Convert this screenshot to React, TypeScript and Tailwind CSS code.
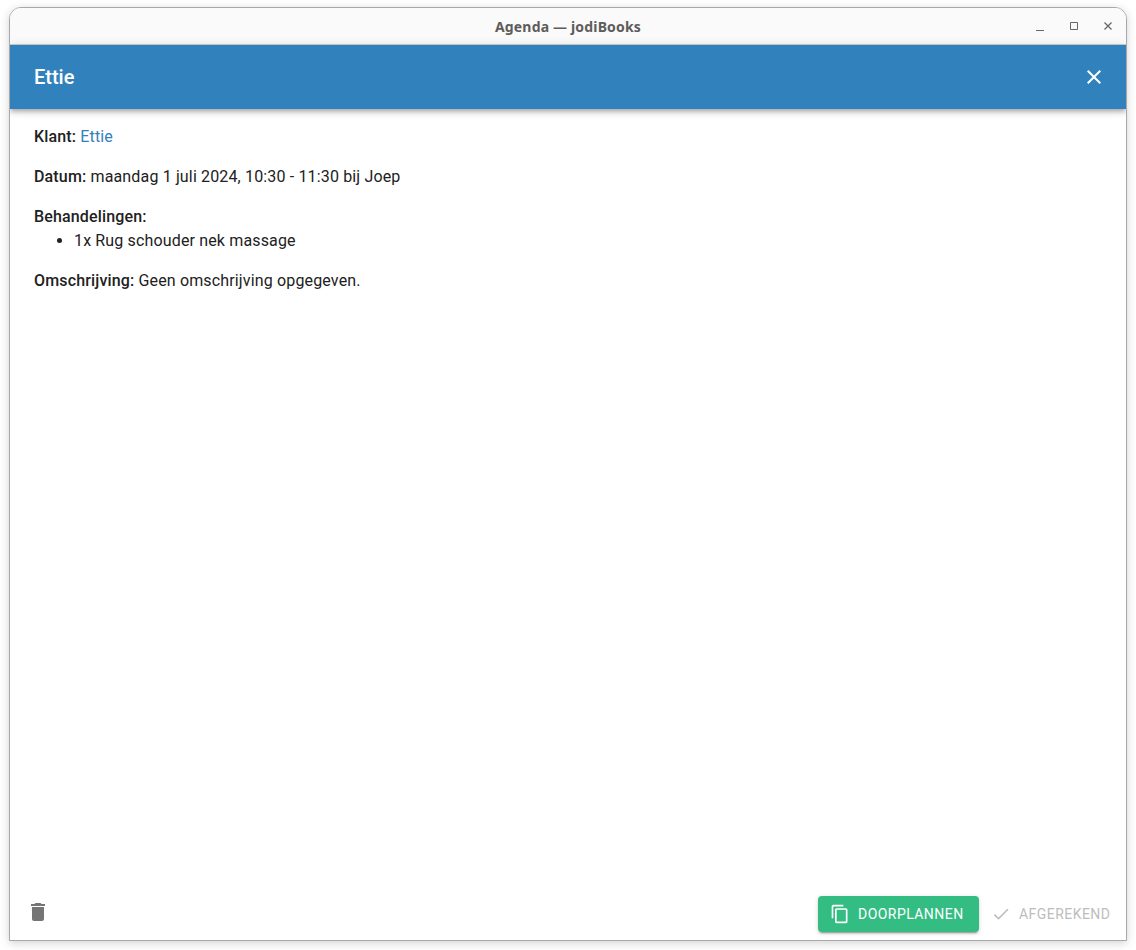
export default function App() {
  return (
    <div className="h-[950px] w-[1136px] bg-white pt-[7px] pl-[9px] pr-[9px] pb-[9px] font-['Roboto',sans-serif] overflow-hidden">
      <div className="h-full flex flex-col border border-[#a8a8a8] rounded-t-[12px] bg-white shadow-[0_2px_10px_rgba(0,0,0,0.18)] overflow-hidden">
        <div className="relative h-[37px] shrink-0 bg-[#fafafa] border-b border-[#cfcfcf] flex items-center justify-center">
          <span className="font-['Noto_Sans',sans-serif] font-bold text-[14px] tracking-[0.17px] text-[#5e5c5a]">Agenda — jodiBooks</span>
          <div className="absolute right-[10px] top-[10px] flex items-center gap-[18px]">
            <svg width="16" height="16" viewBox="0 0 16 16"><path d="M4 12h8v1H4z" fill="#666" /></svg>
            <svg width="16" height="16" viewBox="0 0 16 16" fill="none"><path d="M4.5 4.5h7v7h-7z" stroke="#666" /></svg>
            <svg width="16" height="16" viewBox="0 0 16 16" fill="none"><path d="M4.5 4.5l7 7M11.5 4.5l-7 7" stroke="#666" strokeWidth="1.3" /></svg>
          </div>
        </div>
        <header className="relative z-10 h-[64px] shrink-0 bg-[#3181bd] flex items-center justify-between pl-[24px] pr-[20px] shadow-[0_2px_4px_-1px_rgba(0,0,0,0.2),0_4px_5px_0_rgba(0,0,0,0.14),0_1px_10px_0_rgba(0,0,0,0.12)]">
          <h1 className="text-[20px] font-medium text-white leading-[32px]">Ettie</h1>
          <svg width="24" height="24" viewBox="0 0 24 24" fill="#fff"><path d="M19 6.41L17.59 5 12 10.59 6.41 5 5 6.41 10.59 12 5 17.59 6.41 19 12 13.41 17.59 19 19 17.59 13.41 12z" /></svg>
        </header>
        <main className="flex-1 px-[24px] pt-[16px] text-[16px] leading-[24px] tracking-[0.15px] text-[#212121]">
          <p className="mb-[16px]"><b className="font-medium">Klant:</b> <a className="text-[#3181bd]">Ettie</a></p>
          <p className="mb-[16px]"><b className="font-medium">Datum:</b> maandag 1 juli 2024, 10:30 - 11:30 bij Joep</p>
          <p><b className="font-medium">Behandelingen:</b></p>
          <ul className="list-disc pl-[40px] mb-[16px]"><li>1x Rug schouder nek massage</li></ul>
          <p><b className="font-medium">Omschrijving:</b> Geen omschrijving opgegeven.</p>
        </main>
        <footer className="h-[44px] shrink-0 flex items-start justify-between pl-[16px]">
          <svg className="mt-[4px]" width="24" height="24" viewBox="0 0 24 24" fill="#757575"><path d="M6 19c0 1.1.9 2 2 2h8c1.1 0 2-.9 2-2V7H6v12zM19 4h-3.5l-1-1h-5l-1 1H5v2h14V4z" /></svg>
          <div className="flex items-center gap-[8px]">
            <button className="h-[36px] w-[161px] rounded-[4px] bg-[#33bd83] text-white flex items-center pl-[12px] text-[14px] font-[450] tracking-[0.45px] shadow-[0_3px_1px_-2px_rgba(0,0,0,0.2),0_2px_2px_0_rgba(0,0,0,0.14),0_1px_5px_0_rgba(0,0,0,0.12)]">
              <svg className="mr-[8px]" width="20" height="20" viewBox="0 0 24 24" fill="#fff"><path d="M16 1H4c-1.1 0-2 .9-2 2v14h2V3h12V1zm3 4H8c-1.1 0-2 .9-2 2v14c0 1.1.9 2 2 2h11c1.1 0 2-.9 2-2V7c0-1.1-.9-2-2-2zm0 16H8V7h11v14z" /></svg>
              DOORPLANNEN
            </button>
            <button className="h-[36px] w-[139px] flex items-center pl-[4px] text-[14px] font-[450] tracking-[0.45px] text-[#bdbdbd]">
              <svg className="mr-[8px]" width="20" height="20" viewBox="0 0 24 24" fill="#bdbdbd"><path d="M9 16.17L4.83 12l-1.42 1.41L9 19 21 7l-1.41-1.41z" /></svg>
              AFGEREKEND
            </button>
          </div>
        </footer>
      </div>
    </div>
  );
}
